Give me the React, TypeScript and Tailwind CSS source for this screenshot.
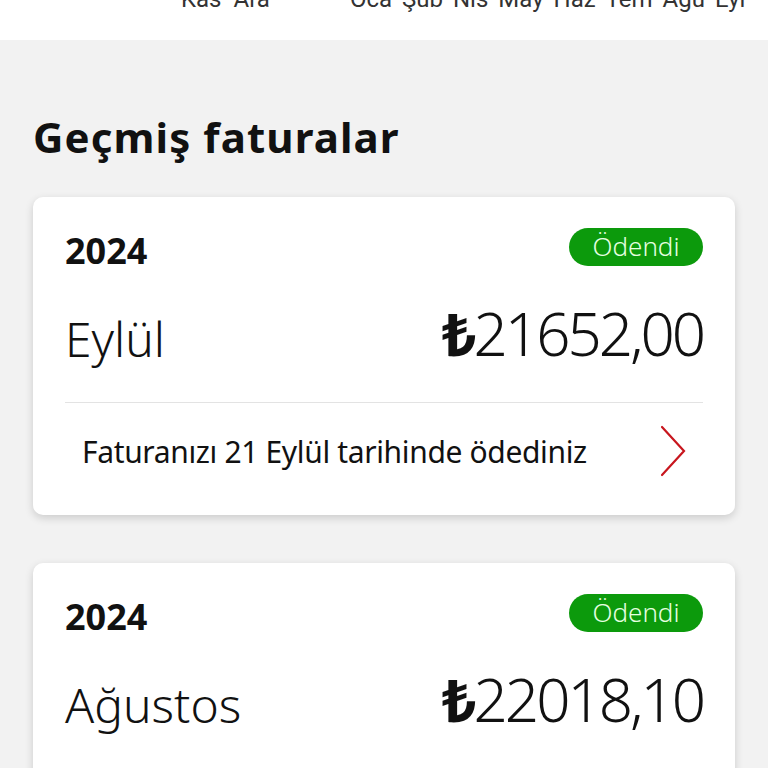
import React from "react";

function Chevron() {
  return (
    <svg width="30" height="52" viewBox="0 0 30 52" fill="none">
      <path d="M3 2 L25 26 L3 50" stroke="#c8161e" strokeWidth="2.2" strokeLinecap="round" strokeLinejoin="miter" />
    </svg>
  );
}

function Bill({ month, amount, paidText }: { month: string; amount: string; paidText?: string }) {
  return (
    <div className="bg-white rounded-[10px] shadow-[0_3px_8px_rgba(0,0,0,0.16)] mx-[33px]">
      <div className="px-[32px] pt-[31px]">
        <div className="flex items-center justify-between h-[38px]">
          <span className="text-[36px] font-bold text-[#111] leading-none mt-[8px]">2024</span>
          <span className="h-[38px] w-[134px] rounded-full bg-[#0c9a0c] text-[#e6ffe0] text-[26px] font-light leading-none flex items-center justify-center pb-[3px]">
            Ödendi
          </span>
        </div>
        <div className="flex items-end justify-between mt-[47px] h-[50px]">
          <span className="text-[48px] font-light text-[#111] leading-none">{month}</span>
          <span className="text-[60px] font-light text-[#111] leading-none tracking-[-3px]">
            <span className="font-bold">₺</span>
            {amount}
          </span>
        </div>
      </div>
      {paidText && (
        <>
          <div className="mx-[32px] mt-[39px] border-t border-[#e3e3e3]" />
          <div className="flex items-center justify-between pl-[49px] pr-[46px] h-[98px] pb-[2px]">
            <span className="text-[30px] text-[#111] tracking-[-0.35px]">{paidText}</span>
            <Chevron />
          </div>
          <div className="h-[14px]" />
        </>
      )}
    </div>
  );
}

export default function App() {
  return (
    <div
      className="w-[768px] h-[768px] overflow-hidden bg-[#f2f2f2]"
      style={{ fontFamily: '"Noto Sans", "Open Sans", sans-serif' }}
    >
      <div className="h-[40px] bg-white overflow-hidden">
        <div
          className="flex items-start pl-[181px] mt-[-13px] text-[24px] text-[#333] leading-none"
          style={{ fontFamily: 'Roboto, "Liberation Sans", sans-serif' }}
        >
          <div className="flex gap-[12px]">
            <span>Kas</span>
            <span>Ara</span>
          </div>
          <div className="flex gap-[10px] ml-[80px]">
            <span>Oca</span>
            <span>Şub</span>
            <span>Nis</span>
            <span>May</span>
            <span>Haz</span>
            <span>Tem</span>
            <span>Ağu</span>
            <span>Eyl</span>
          </div>
        </div>
      </div>
      <h1 className="px-[33px] pt-[76px] text-[42px] font-bold text-[#111] leading-none tracking-[1.1px]">
        Geçmiş faturalar
      </h1>
      <div className="mt-[39px] flex flex-col gap-[48px]">
        <Bill month="Eylül" amount="21652,00" paidText="Faturanızı 21 Eylül tarihinde ödediniz" />
        <Bill month="Ağustos" amount="22018,10" paidText="Faturanızı 21 Ağustos tarihinde ödediniz" />
      </div>
    </div>
  );
}
